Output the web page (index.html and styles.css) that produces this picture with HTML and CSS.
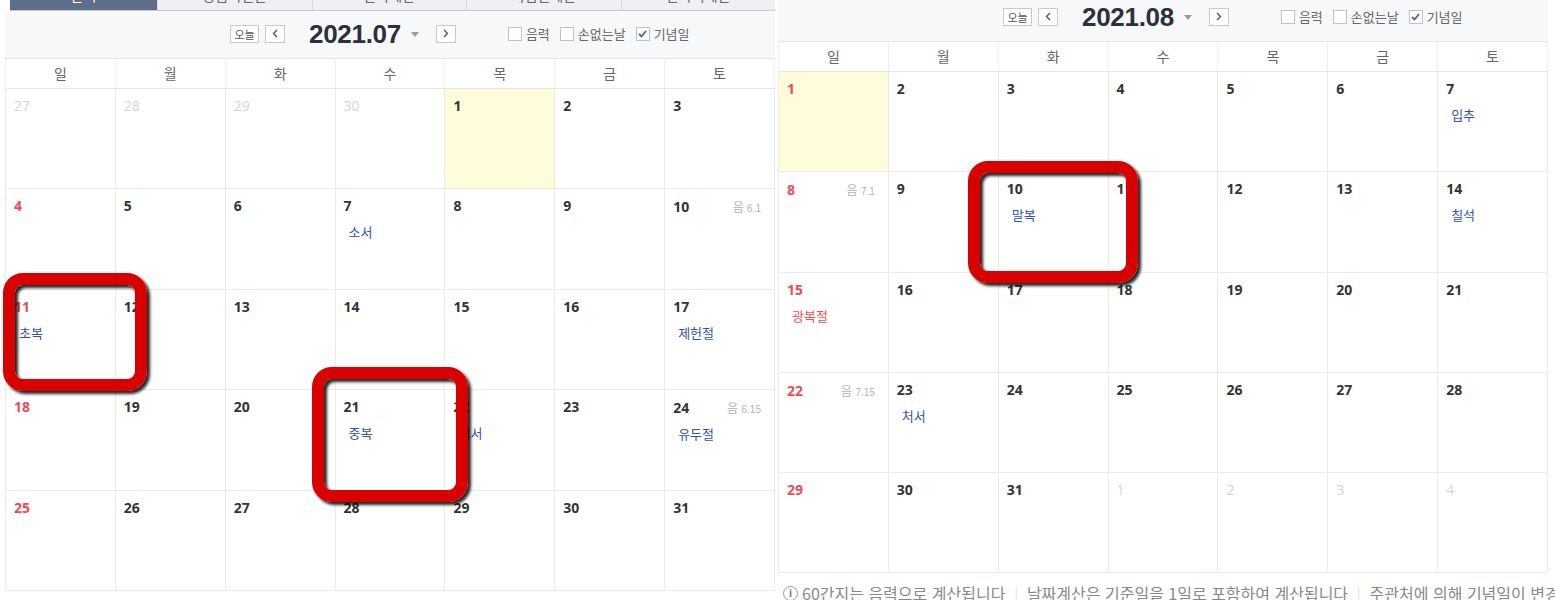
FILE: index.html
```html
<!DOCTYPE html>
<html lang="ko">
<head>
  <meta charset="UTF-8">
  <title>달력</title>
  <link rel="stylesheet" href="styles.css">
</head>
<body>
  <div class="page">

    <section class="cal cal-july">
      <div class="tabs">
        <div class="tab on">달력</div>
        <div class="tab">양음력변환</div>
        <div class="tab">날짜계산</div>
        <div class="tab">기념일계산</div>
        <div class="tab">만나이계산</div>
      </div>
      <div class="toolbar">
        <span class="today-btn">오늘</span>
        <span class="nav-btn"><svg width="6" height="9" viewBox="0 0 6 9"><polyline points="5,1 1.5,4.5 5,8" fill="none" stroke="#555" stroke-width="1.4"/></svg></span>
        <strong class="month">2021.07</strong>
        <span class="caret"></span>
        <span class="nav-btn nav-next"><svg width="6" height="9" viewBox="0 0 6 9"><polyline points="1,1 4.5,4.5 1,8" fill="none" stroke="#555" stroke-width="1.4"/></svg></span>
        <div class="opts">
          <label class="opt"><span class="chk"></span>음력</label>
          <label class="opt"><span class="chk"></span>손없는날</label>
          <label class="opt"><span class="chk checked"><svg width="9" height="8" viewBox="0 0 9 8"><polyline points="1,4 3.5,6.5 8,1" fill="none" stroke="#2f64c8" stroke-width="1.8"/></svg></span>기념일</label>
        </div>
      </div>
      <div class="week">
        <span>일</span><span>월</span><span>화</span><span>수</span><span>목</span><span>금</span><span>토</span>
      </div>
      <div class="grid grid-july" id="julGrid"></div>
    </section>

    <section class="cal cal-aug">
      <div class="toolbar">
        <span class="today-btn">오늘</span>
        <span class="nav-btn"><svg width="6" height="9" viewBox="0 0 6 9"><polyline points="5,1 1.5,4.5 5,8" fill="none" stroke="#555" stroke-width="1.4"/></svg></span>
        <strong class="month">2021.08</strong>
        <span class="caret"></span>
        <span class="nav-btn nav-next"><svg width="6" height="9" viewBox="0 0 6 9"><polyline points="1,1 4.5,4.5 1,8" fill="none" stroke="#555" stroke-width="1.4"/></svg></span>
        <div class="opts">
          <label class="opt"><span class="chk"></span>음력</label>
          <label class="opt"><span class="chk"></span>손없는날</label>
          <label class="opt"><span class="chk checked"><svg width="9" height="8" viewBox="0 0 9 8"><polyline points="1,4 3.5,6.5 8,1" fill="none" stroke="#2f64c8" stroke-width="1.8"/></svg></span>기념일</label>
        </div>
      </div>
      <div class="week">
        <span>일</span><span>월</span><span>화</span><span>수</span><span>목</span><span>금</span><span>토</span>
      </div>
      <div class="grid grid-aug" id="augGrid"></div>
      <p class="note">
        <span class="info">i</span>60간지는 음력으로 계산됩니다<span class="sep">|</span>날짜계산은 기준일을 1일로 포함하여 계산됩니다<span class="sep">|</span>주관처에 의해 기념일이 변경될 수 있습니다
      </p>
    </section>

    <div class="mark mark-1"></div>
    <div class="mark mark-2"></div>
    <div class="mark mark-3"></div>
  </div>

  <script>
    // n: 날짜, o: 다른 달, t: 오늘, e: 기념일, h: 공휴일, l: 음력
    const july = [
      [{n:27,o:1},{n:28,o:1},{n:29,o:1},{n:30,o:1},{n:1,t:1},{n:2},{n:3}],
      [{n:4},{n:5},{n:6},{n:7,e:'소서'},{n:8},{n:9},{n:10,l:'6.1'}],
      [{n:11,e:'초복'},{n:12},{n:13},{n:14},{n:15},{n:16},{n:17,e:'제헌절'}],
      [{n:18},{n:19},{n:20},{n:21,e:'중복'},{n:22,e:'대서'},{n:23},{n:24,l:'6.15',e:'유두절'}],
      [{n:25},{n:26},{n:27},{n:28},{n:29},{n:30},{n:31}]
    ];

    const august = [
      [{n:1,t:1},{n:2},{n:3},{n:4},{n:5},{n:6},{n:7,e:'입추'}],
      [{n:8,l:'7.1'},{n:9},{n:10,e:'말복'},{n:11},{n:12},{n:13},{n:14,e:'칠석'}],
      [{n:15,e:'광복절',h:1},{n:16},{n:17},{n:18},{n:19},{n:20},{n:21}],
      [{n:22,l:'7.15'},{n:23,e:'처서'},{n:24},{n:25},{n:26},{n:27},{n:28}],
      [{n:29},{n:30},{n:31},{n:1,o:1},{n:2,o:1},{n:3,o:1},{n:4,o:1}]
    ];

    function renderMonth(id, weeks) {
      let html = '';
      weeks.forEach(week => {
        week.forEach((d, i) => {
          let cls = 'day';
          if (d.t) cls += ' today';
          let numCls = 'num';
          if (d.o) numCls += ' other';
          else if (i === 0) numCls += ' sun';
          html += `<div class="${cls}"><div class="day-top"><span class="${numCls}">${d.n}</span>`;
          if (d.l) html += `<span class="lunar">음 <small>${d.l}</small></span>`;
          html += `</div>`;
          if (d.e) html += `<p class="evt${d.h ? ' holiday' : ''}">${d.e}</p>`;
          html += `</div>`;
        });
      });
      document.getElementById(id).innerHTML = html;
    }

    renderMonth('julGrid', july);
    renderMonth('augGrid', august);
  </script>
</body>
</html>
```

FILE: styles.css
```css
body {
  margin: 0;
  background-color: #fff;
  font-family: "Noto Sans CJK KR", "Noto Sans", sans-serif;
  color: #333;
}
.page {
  position: relative;
  display: flex;
  width: 1555px;
  height: 600px;
  overflow: hidden;
}
.cal {
  width: 770px;
  flex: none;
}
.cal-july {
  margin-left: 5px;
}
.cal-aug {
  margin-left: 3px;
  margin-top: -6px;
}

/* tabs */
.tabs {
  display: flex;
  height: 11px;
  margin-left: 5px;
  border-bottom: 1px solid #c6cbd2;
  box-sizing: border-box;
}
.tab {
  flex: 1;
  display: flex;
  align-items: flex-end;
  justify-content: center;
  overflow: hidden;
  padding-bottom: 8px;
  box-sizing: border-box;
  background-color: #eef0f3;
  border-left: 1px solid #d6d9de;
  font-size: 14px;
  line-height: 14px;
  color: #666;
}
.tab.on {
  flex: 0 0 147px;
  background-color: #5d6e89;
  border-left: none;
  color: #fff;
}

/* toolbar */
.toolbar {
  display: flex;
  align-items: center;
  height: 48px;
  padding: 0 0 2px 225px;
  box-sizing: border-box;
  background-color: #f7f8fa;
  border-bottom: 1px solid #e2e4e8;
}
.today-btn {
  width: 29px;
  height: 18px;
  box-sizing: border-box;
  border: 1px solid #c9c9c9;
  background-color: #fff;
  font-size: 11px;
  line-height: 16px;
  text-align: center;
  color: #555;
}
.nav-btn {
  display: flex;
  align-items: center;
  justify-content: center;
  width: 20px;
  height: 18px;
  margin-left: 6px;
  box-sizing: border-box;
  border: 1px solid #c9c9c9;
  background-color: #fff;
}
.month {
  margin-left: 24px;
  font-family: "Liberation Sans", Arial, sans-serif;
  font-size: 26px;
  line-height: 28px;
  font-weight: bold;
  color: #2b303d;
  letter-spacing: -0.3px;
}
.caret {
  width: 0;
  height: 0;
  margin-left: 10px;
  margin-top: 2px;
  border-left: 4px solid transparent;
  border-right: 4px solid transparent;
  border-top: 5px solid #9a9a9a;
}
.nav-next {
  margin-left: 17px;
}
.opts {
  display: flex;
  align-items: center;
  gap: 10px;
  margin-left: 52px;
}
.opt {
  display: flex;
  align-items: center;
  font-size: 13px;
  color: #666;
}
.chk {
  display: flex;
  align-items: center;
  justify-content: center;
  width: 14px;
  height: 14px;
  margin-right: 4px;
  box-sizing: border-box;
  border: 1px solid #c2c2c2;
  background-color: #fff;
}

/* week header */
.week {
  display: grid;
  grid-template-columns: repeat(7, 1fr);
  height: 30px;
  box-sizing: border-box;
  border-bottom: 1px solid #e6e6e6;
  border-left: 1px solid #eee;
}
.cal-july .week {
  height: 29.5px;
}
.week span {
  border-right: 1px solid #eee;
  font-size: 14px;
  line-height: 29px;
  text-align: center;
  color: #666;
}

/* grid */
.grid {
  display: grid;
  grid-template-columns: repeat(7, 1fr);
  grid-auto-rows: 100.25px;
  border-left: 1px solid #ebebeb;
}
.grid-july {
  grid-auto-rows: 100.5px;
}
.day {
  padding: 9px 13px 0 8px;
  box-sizing: border-box;
  border-right: 1px solid #ebebeb;
  border-bottom: 1px solid #ebebeb;
}
.day.today {
  background-color: #fffcda;
}
.day-top {
  display: flex;
  justify-content: space-between;
  align-items: baseline;
}
.num {
  font-family: "Open Sans", "Liberation Sans", sans-serif;
  font-size: 14px;
  line-height: 16px;
  font-weight: bold;
  color: #333;
}
.num.sun {
  color: #ee4b52;
}
.num.other {
  color: #d4d4d4;
  font-weight: normal;
}
.lunar {
  font-size: 12px;
  color: #b3b3b3;
}
.lunar small {
  font-family: "Liberation Sans", Arial, sans-serif;
  font-size: 10px;
}
.evt {
  margin: 9px 0 0 5px;
  font-size: 13px;
  line-height: 18px;
  color: #2f53b1;
}
.evt.holiday {
  color: #ef4f55;
}

/* footer note */
.note {
  display: flex;
  align-items: center;
  margin: 9px 0 0 5px;
  font-size: 16px;
  line-height: 22px;
  color: #888;
  white-space: nowrap;
}
.info {
  width: 13px;
  height: 13px;
  flex: none;
  margin-right: 4px;
  border: 1px solid #999;
  border-radius: 50%;
  font-family: "Liberation Sans", Arial, sans-serif;
  font-size: 11px;
  font-weight: bold;
  line-height: 13px;
  text-align: center;
  color: #777;
}
.sep {
  margin: 0 9px;
  font-size: 13px;
  color: #ddd;
}

/* red highlight marks drawn over the calendar */
.mark {
  position: absolute;
  box-sizing: border-box;
  border: 12px solid #d80000;
  border-radius: 20px;
  box-shadow: 3px 3px 3px rgba(0, 0, 0, 0.85), inset 3px 3px 3px rgba(0, 0, 0, 0.85);
}
.mark-1 {
  left: 3px;
  top: 273px;
  width: 144px;
  height: 118px;
}
.mark-2 {
  left: 312px;
  top: 367px;
  width: 156px;
  height: 135px;
}
.mark-3 {
  left: 968px;
  top: 161px;
  width: 170px;
  height: 122px;
}
```
